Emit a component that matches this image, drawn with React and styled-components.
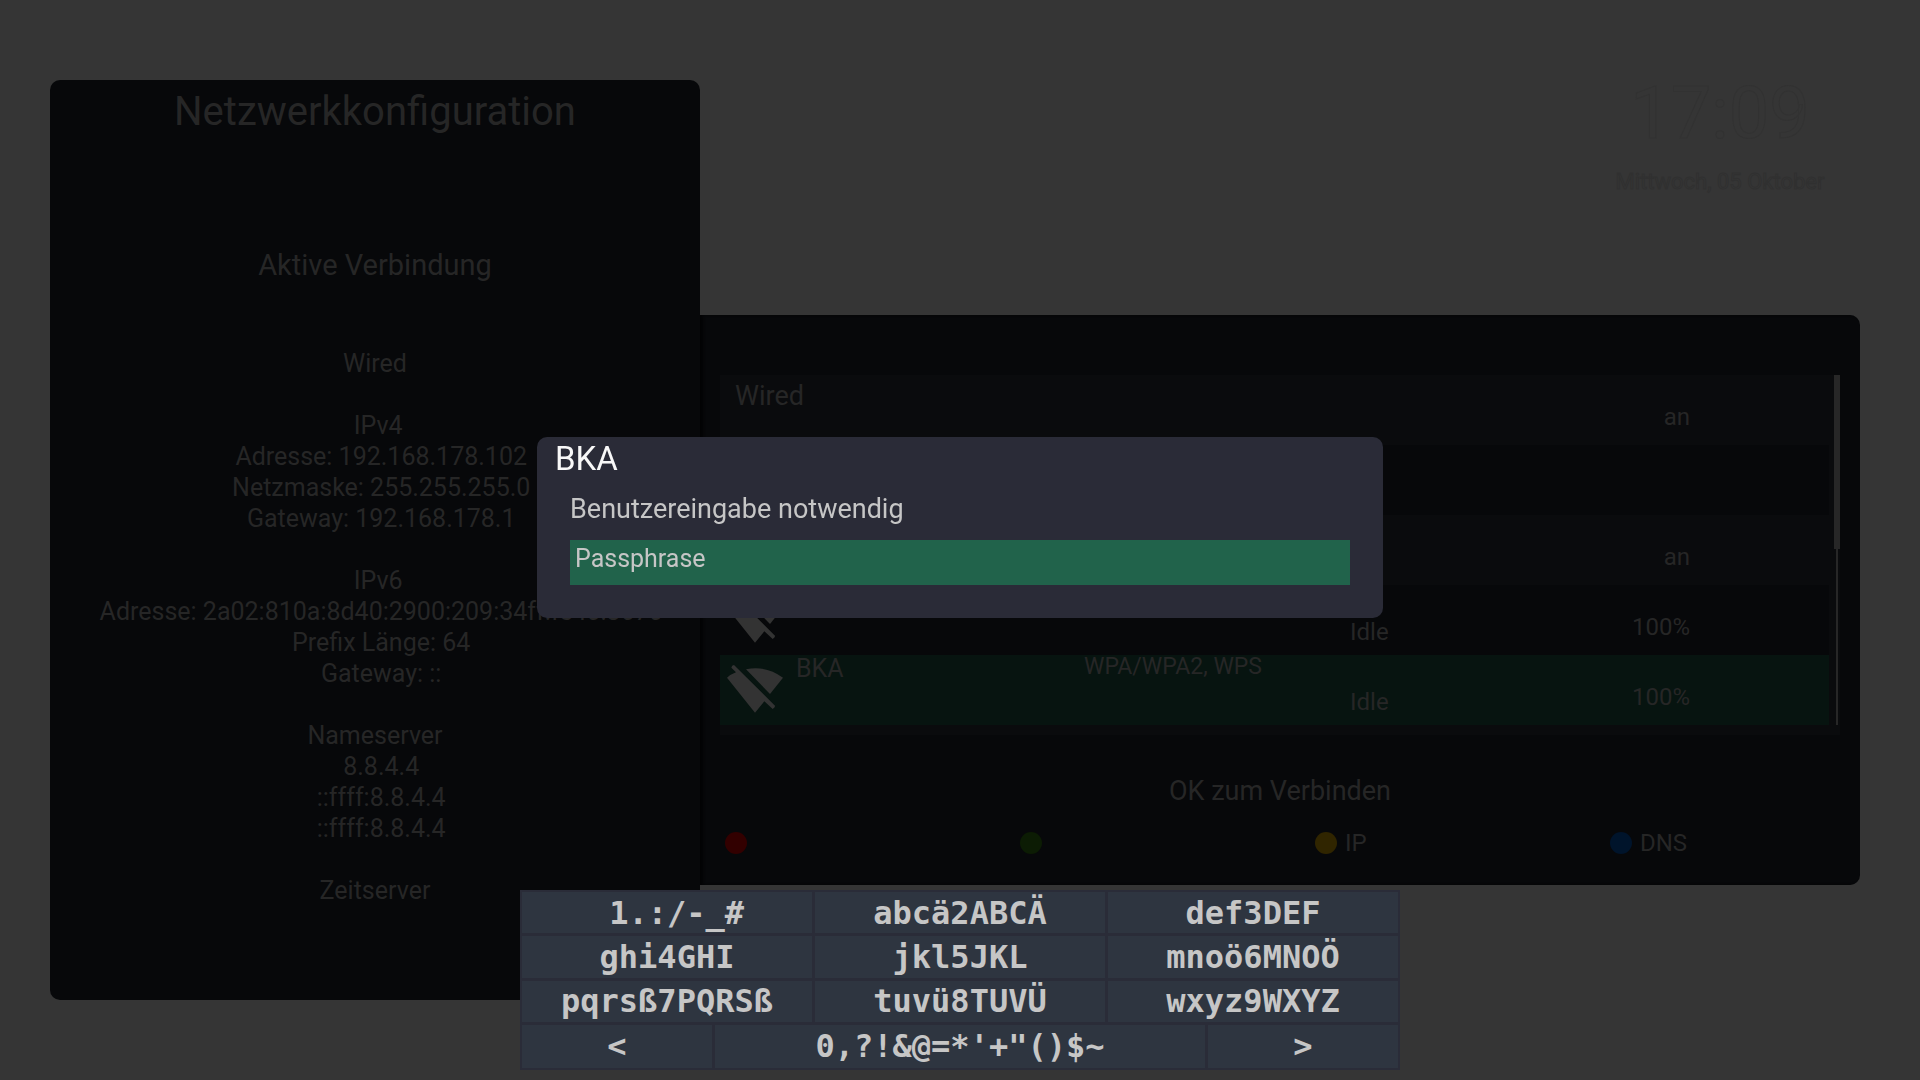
import React, { useState } from 'react'
import styled, { createGlobalStyle } from 'styled-components'

const connectionLines = [
  'Wired',
  '',
  ' IPv4',
  '  Adresse: 192.168.178.102',
  '  Netzmaske: 255.255.255.0',
  '  Gateway: 192.168.178.1',
  '',
  ' IPv6',
  '  Adresse: 2a02:810a:8d40:2900:209:34ff:fe40:3670',
  '  Prefix Länge: 64',
  '  Gateway: ::',
  '',
  'Nameserver',
  '  8.8.4.4',
  '  ::ffff:8.8.4.4',
  '  ::ffff:8.8.4.4',
  '',
  'Zeitserver',
]

const services = [
  { id: 1, group: 'Wired', value: 'an' },
  { id: 2 },
  { id: 3, value: 'an' },
  { id: 4, wifi: true, status: 'Idle', value: '100%' },
  { id: 5, wifi: true, name: 'BKA', security: 'WPA/WPA2, WPS', status: 'Idle', value: '100%' },
]

const colorKeys = [
  { color: '#320000', name: 'Rot' },
  { color: '#0c1c04', name: 'Grün' },
  { color: '#302500', name: 'Gelb', label: 'IP' },
  { color: '#00142b', name: 'Blau', label: 'DNS' },
]

const keys = [
  ' 1.:/-_#', 'abcä2ABCÄ', 'def3DEF',
  'ghi4GHI', 'jkl5JKL', 'mnoö6MNOÖ',
  'pqrsß7PQRSß', 'tuvü8TUVÜ', 'wxyz9WXYZ',
]

const WifiOffIcon = () => (
  <svg width="56" height="50" viewBox="621 729 168 150" fill="#333333" aria-hidden="true">
    <path d="M642 735 L765 857 Q766 863 758 867 L733 844 L705 878 L621 773 Q632 763 648 757 L634 743 Q635 736 642 735 Z" />
    <path d="M678 748 Q737 735 789 773 L750 822 Z" />
  </svg>
)

const App = () => {

  const [selected, setSelected] = useState(5);
  const [passphrase, setPassphrase] = useState('');

  return (
    <>
      <GlobalStyle />
      <Screen>
        <Sidebar>
          <Title>Netzwerkkonfiguration</Title>
          <Subtitle>Aktive Verbindung</Subtitle>
          <Details>
            {connectionLines.map((line, i) => <Line key={i}>{line}</Line>)}
          </Details>
        </Sidebar>

        <Content>
          <Clock>
            <Time>17:09</Time>
            <Today>Mittwoch, 05 Oktober</Today>
          </Clock>

          <Panel>
            <ListBox>
              <List>
                {services.map(s => (
                  <li key={s.id}>
                    <Row $selected={s.id === selected} $dark={s.id % 2 === 0} onClick={() => setSelected(s.id)}>
                      <IconCell>{s.wifi && <WifiOffIcon />}</IconCell>
                      {s.group ? <Group>{s.group}</Group> : <Name>{s.name}</Name>}
                      <Security>{s.security}</Security>
                      <Status>{s.status}</Status>
                      <Value>{s.value}</Value>
                    </Row>
                  </li>
                ))}
              </List>
              <Track><Thumb /></Track>
            </ListBox>

            <Hint>OK zum Verbinden</Hint>

            <ColorKeys>
              {colorKeys.map(k => (
                <ColorKey key={k.name} aria-label={k.label || k.name}>
                  <Dot $color={k.color} />
                  {k.label}
                </ColorKey>
              ))}
            </ColorKeys>
          </Panel>
        </Content>
      </Screen>

      <Overlay>
        <Dialog role="dialog" aria-labelledby="dialog-title">
          <DialogTitle id="dialog-title">BKA</DialogTitle>
          <DialogText>Benutzereingabe notwendig</DialogText>
          <Field>
            <label htmlFor="passphrase">Passphrase</label>
            <FieldInput id="passphrase" type="text" value={passphrase} onChange={e => setPassphrase(e.target.value)} />
          </Field>
        </Dialog>

        <Keypad>
          <KeyRows>
            {keys.map(k => <Key key={k}>{k}</Key>)}
          </KeyRows>
          <LastRow>
            <Key>{'<'}</Key>
            <Key>{`0,?!&@=*'+"()$~`}</Key>
            <Key>{'>'}</Key>
          </LastRow>
        </Keypad>
      </Overlay>
    </>
  )
}

export default App


const GlobalStyle = createGlobalStyle`
  * {
    box-sizing: border-box;
  }

  body {
    margin: 0;
    background-color: #353535;
    color: #262626;
    font-family: Roboto, "Liberation Sans", sans-serif;
  }

  h1, h2, p, ul {
    margin: 0;
    padding: 0;
    font-weight: 400;
    list-style: none;
  }

  button, input {
    font: inherit;
    color: inherit;
    border: none;
    padding: 0;
    background: none;
    text-align: left;
  }
`;

const Screen = styled.main`
  display: grid;
  grid-template-columns: 650fr 1160fr;
  min-height: 100vh;
  padding: 80px 60px 80px 50px;
`;

const Sidebar = styled.section`
  background-color: #07080a;
  border-radius: 10px 10px 0 10px;
  text-align: center;
`;

const Title = styled.h1`
  padding-top: 4px;
  font-size: 40px;
  line-height: 56px;
`;

const Subtitle = styled.h2`
  margin-top: 105px;
  font-size: 29px;
  line-height: 40px;
`;

const Details = styled.div`
  margin-top: 63px;
  font-size: 25px;
  line-height: 31px;
`;

const Line = styled.p`
  min-height: 31px;
  white-space: pre;
`;

const Content = styled.div`
  display: flex;
  flex-direction: column;
`;

const Clock = styled.header`
  align-self: flex-end;
  width: 280px;
  height: 235px;
  text-align: center;
  color: #353535;
`;

const Time = styled.p`
  font-size: 72px;
  line-height: 68px;
  -webkit-text-stroke: 1px #323232;
`;

const Today = styled.p`
  margin-top: 18px;
  font-size: 22px;
  line-height: 31px;
  -webkit-text-stroke: 1px #303030;
`;

const Panel = styled.section`
  height: 570px;
  padding: 60px 20px 0;
  background-color: #07080a;
  border-radius: 0 10px 10px 0;
  box-shadow: inset 3px 0 3px #030304;
`;

const ListBox = styled.div`
  display: flex;
  justify-content: space-between;
  padding-bottom: 10px;
  background-color: #0a0b0d;
`;

const List = styled.ul`
  flex: 1;
`;

const Row = styled.button`
  display: grid;
  grid-template-columns: 76px 288fr 266fr 170fr 170fr 139fr;
  width: 100%;
  height: 70px;
  font-size: 24px;
  line-height: 32px;
  background-color: ${props => props.$selected ? '#071410' : props.$dark ? '#07080a' : 'transparent'};
`;

const IconCell = styled.span`
  grid-row: 1;
  grid-column: 1;
  padding: 8px 0 0 7px;
`;

const Group = styled.span`
  grid-row: 1;
  grid-column: 1 / 3;
  padding: 5px 0 0 15px;
  font-size: 27px;
`;

const Name = styled.span`
  grid-column: 2;
  font-size: 25px;
  line-height: 27px;
  white-space: nowrap;
`;

const Security = styled.span`
  font-size: 23px;
  line-height: 24px;
  white-space: nowrap;
`;

const Status = styled.span`
  padding-top: 31px;
`;

const Value = styled.span`
  padding-top: 26px;
  text-align: right;
`;

const Track = styled.div`
  width: 6px;
  height: 350px;
  margin-left: 5px;
  background: linear-gradient(#272727, #272727) center / 2px 100% no-repeat;
`;

const Thumb = styled.div`
  height: 174px;
  background-color: #272727;
`;

const Hint = styled.p`
  margin-top: 36px;
  font-size: 27px;
  line-height: 40px;
  text-align: center;
`;

const ColorKeys = styled.div`
  display: grid;
  grid-template-columns: repeat(4, 295fr);
  margin: 16px -65px 0 5px;
`;

const ColorKey = styled.button`
  display: flex;
  align-items: center;
  gap: 8px;
  height: 32px;
  font-size: 24px;
`;

const Dot = styled.span`
  width: 22px;
  height: 22px;
  border-radius: 50%;
  background-color: ${props => props.$color};
`;

const Overlay = styled.div`
  position: fixed;
  inset: 0;
  display: flex;
  flex-direction: column;
  align-items: center;
  justify-content: space-between;
  padding: 437px 0 10px;
`;

const Dialog = styled.section`
  width: 846px;
  max-width: 100%;
  padding: 0 33px 33px;
  background-color: #2a2b37;
  border-radius: 10px;
  color: #c6c6c6;
  font-size: 27px;
`;

const DialogTitle = styled.h1`
  margin-left: -15px;
  color: #f8f8f8;
  font-size: 33px;
  line-height: 43px;
`;

const DialogText = styled.p`
  padding: 9px 0 11px;
  line-height: 40px;
`;

const Field = styled.div`
  display: flex;
  gap: 12px;
  height: 45px;
  padding-left: 5px;
  background-color: #21634b;
  font-size: 25px;
  line-height: 38px;
`;

const FieldInput = styled.input`
  flex: 1;
  outline: none;
`;

const Keypad = styled.div`
  display: grid;
  grid-template-rows: 3fr 1fr;
  gap: 3px;
  width: 880px;
  max-width: 100%;
  height: 180px;
  padding: 2px;
  background-color: #2a2c38;
  color: #c6c6c6;
  font-family: "DejaVu Sans Mono", monospace;
  font-size: 32px;
  font-weight: 700;
`;

const KeyRows = styled.div`
  display: grid;
  grid-template-columns: repeat(3, 1fr);
  grid-auto-rows: 1fr;
  gap: 3px;
`;

const LastRow = styled.div`
  display: grid;
  grid-template-columns: 190fr 490fr 190fr;
  gap: 3px;
`;

const Key = styled.button`
  background-color: #2e3540;
  text-align: center;
  white-space: pre;
  line-height: 40px;
`;
